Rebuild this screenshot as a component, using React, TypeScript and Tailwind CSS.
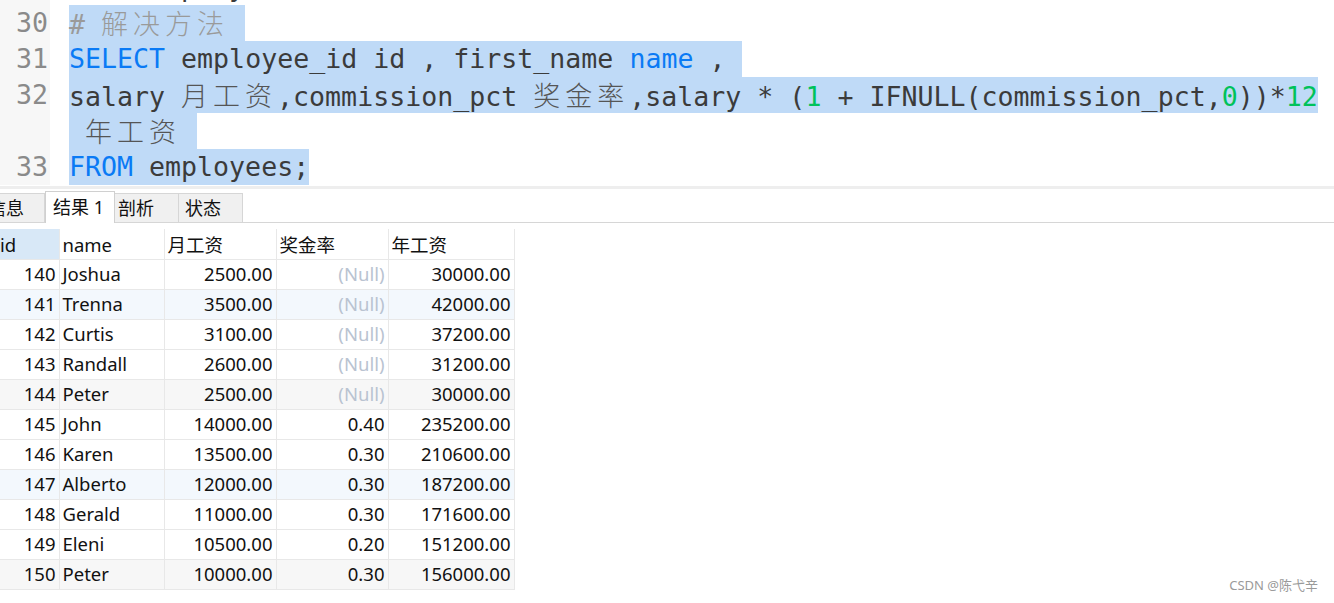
import React from "react";

type Tok = { t: string; k?: "kw" | "num" | "cm" | "cjk" | "cjkcm" };

const mono = { fontFamily: '"DejaVu Sans Mono", "Liberation Mono", "Noto Sans CJK SC", monospace' };

const rows: { n?: number; sel: Tok[]; plain?: Tok[] }[] = [
  { n: 29, sel: [], plain: [{ t: "FROM", k: "kw" }, { t: " employees;" }] },
  { n: 30, sel: [{ t: "# ", k: "cm" }, { t: "解决方法", k: "cjkcm" }, { t: " " }] },
  {
    n: 31,
    sel: [
      { t: "SELECT", k: "kw" },
      { t: " employee_id id , first_name " },
      { t: "name", k: "kw" },
      { t: " , " },
    ],
  },
  {
    n: 32,
    sel: [
      { t: "salary " },
      { t: "月工资", k: "cjk" },
      { t: ",commission_pct " },
      { t: "奖金率", k: "cjk" },
      { t: ",salary * (" },
      { t: "1", k: "num" },
      { t: " + IFNULL(commission_pct," },
      { t: "0", k: "num" },
      { t: "))*" },
      { t: "12", k: "num" },
    ],
  },
  { sel: [{ t: " " }, { t: "年工资", k: "cjk" }, { t: " " }] },
  { n: 33, sel: [{ t: "FROM", k: "kw" }, { t: " employees;" }] },
];

function Token({ tok }: { tok: Tok }) {
  if (tok.k === "kw") return <span className="text-[#0a7af5]">{tok.t}</span>;
  if (tok.k === "num") return <span className="text-[#00c25a]">{tok.t}</span>;
  if (tok.k === "cm") return <span className="text-[#9a9a9a]">{tok.t}</span>;
  if (tok.k === "cjk" || tok.k === "cjkcm")
    return (
      <span
        className={
          "inline-block text-[27px] tracking-[5px] font-light " +
          (tok.k === "cjkcm" ? "text-[#9a9a9a]" : "text-[#555]")
        }
        style={{ fontFamily: '"Noto Sans CJK SC", sans-serif' }}
      >
        {tok.t}
      </span>
    );
  return <span>{tok.t}</span>;
}

type Row = { id: number; name: string; m: string; r: string | null; y: string };

const data: Row[] = [
  { id: 140, name: "Joshua", m: "2500.00", r: null, y: "30000.00" },
  { id: 141, name: "Trenna", m: "3500.00", r: null, y: "42000.00" },
  { id: 142, name: "Curtis", m: "3100.00", r: null, y: "37200.00" },
  { id: 143, name: "Randall", m: "2600.00", r: null, y: "31200.00" },
  { id: 144, name: "Peter", m: "2500.00", r: null, y: "30000.00" },
  { id: 145, name: "John", m: "14000.00", r: "0.40", y: "235200.00" },
  { id: 146, name: "Karen", m: "13500.00", r: "0.30", y: "210600.00" },
  { id: 147, name: "Alberto", m: "12000.00", r: "0.30", y: "187200.00" },
  { id: 148, name: "Gerald", m: "11000.00", r: "0.30", y: "171600.00" },
  { id: 149, name: "Eleni", m: "10500.00", r: "0.20", y: "151200.00" },
  { id: 150, name: "Peter", m: "10000.00", r: "0.30", y: "156000.00" },
];

const rowBg = (i: number) => (i % 6 === 1 ? "bg-[#f3f8fd]" : i % 6 === 4 ? "bg-[#f7f7f7]" : "bg-white");

const cell = "h-[30px] border-r border-b border-[#e8e8e8] px-[3px] whitespace-nowrap";

export default function App() {
  return (
    <div
      className="relative h-[603px] w-[1334px] overflow-hidden bg-white"
      style={{ fontFamily: '"Noto Sans", "Noto Sans CJK SC", sans-serif' }}
    >
      {/* editor */}
      <div className="h-[186px] overflow-hidden text-[26.6px] text-[#3b3b3b]" style={mono}>
        <div className="-mt-[31px]">
          {rows.map((r, i) => (
            <div key={i} className="flex h-[36px] leading-[36px] whitespace-pre">
              <div className="w-[50px] shrink-0 bg-[#f7f7f7] pr-[2px] text-right text-[#8a8a8a]">{r.n ?? ""}</div>
              <div className="w-[19px] shrink-0" />
              {r.sel.length > 0 && (
                <div className="bg-[#bfdaf7]">
                  {r.sel.map((t, j) => (
                    <Token key={j} tok={t} />
                  ))}
                </div>
              )}
              {r.plain && (
                <div>
                  {r.plain.map((t, j) => (
                    <Token key={j} tok={t} />
                  ))}
                </div>
              )}
            </div>
          ))}
        </div>
      </div>
      <div className="h-[3px] bg-[#eeeeee]" />

      {/* tabs */}
      <div className="mt-[3px] flex h-[31px] items-end border-b border-[#d6d6d6] text-[18px] text-[#111]">
        <div className="-ml-[19px] flex h-[29px] w-[64px] items-center border border-b-0 border-[#d6d6d6] bg-[#f0f0f0] pl-[6px]">信息</div>
        <div className="-mb-px flex h-[32px] w-[70px] items-center border border-b-0 border-[#d0d0d0] bg-white pl-[7px]">
          结果 1
        </div>
        <div className="flex h-[29px] w-[64px] items-center border border-b-0 border-l-0 border-[#d6d6d6] bg-[#f0f0f0] pl-[3px]">剖析</div>
        <div className="flex h-[29px] w-[64px] items-center border border-b-0 border-l-0 border-[#d6d6d6] bg-[#f0f0f0] pl-[6px]">状态</div>
      </div>

      {/* results grid */}
      <table className="mt-[6px] border-collapse text-[18.5px] text-[#111]">
        <colgroup>
          <col className="w-[59px]" />
          <col className="w-[105px]" />
          <col className="w-[112px]" />
          <col className="w-[112px]" />
          <col className="w-[126px]" />
        </colgroup>
        <thead>
          <tr className="text-left font-normal">
            <th className={cell + " bg-[#d8e8f7] pl-0 pt-[2px] text-left font-normal"}>id</th>
            <th className={cell + " pt-[2px] text-left font-normal"}>name</th>
            <th className={cell + " pt-[2px] text-left font-normal"}>月工资</th>
            <th className={cell + " pt-[2px] text-left font-normal"}>奖金率</th>
            <th className={cell + " pt-[2px] text-left font-normal"}>年工资</th>
          </tr>
        </thead>
        <tbody>
          {data.map((d, i) => (
            <tr key={d.id} className={rowBg(i)}>
              <td className={cell + " text-right"}>{d.id}</td>
              <td className={cell}>{d.name}</td>
              <td className={cell + " text-right"}>{d.m}</td>
              <td className={cell + " text-right"}>
                {d.r ?? <span className="text-[#b9c3d1]">(Null)</span>}
              </td>
              <td className={cell + " text-right"}>{d.y}</td>
            </tr>
          ))}
        </tbody>
      </table>

      <div className="absolute bottom-[8px] right-[16px] text-[13px] text-[#9a9a9a]">CSDN @陈弋辛</div>
    </div>
  );
}
